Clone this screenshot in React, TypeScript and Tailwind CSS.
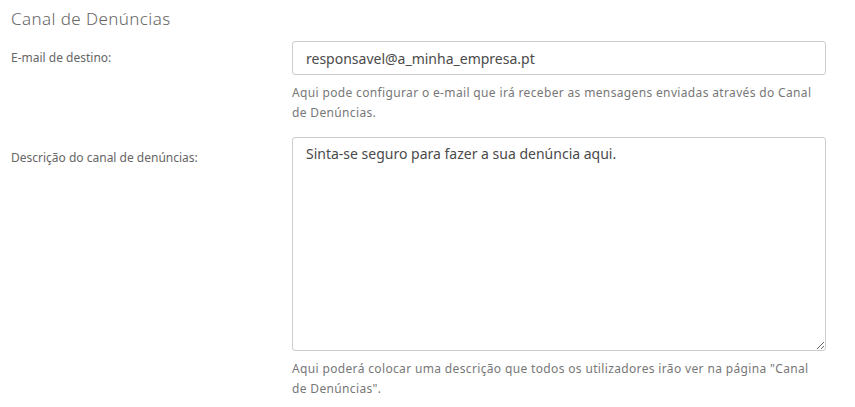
export default function App() {
  return (
    <div className="w-[855px] h-[407px] bg-white font-['Noto_Sans',sans-serif] text-[#555]">
      <h1 className="pl-[11px] pt-[8px] text-[17px] leading-[21px] font-light tracking-[0.4px] text-[#666]">
        Canal de Denúncias
      </h1>
      <div className="mt-[12px] flex">
        <label className="w-[292px] shrink-0 pl-[11px] pt-[9px] text-[12px] leading-[15px] text-[#666]">
          E-mail de destino:
        </label>
        <div className="w-[534px]">
          <input
            className="block w-full h-[34px] rounded-[3px] border border-[#ccc] px-[13px] text-[14px] text-[#4a4a4a] outline-none"
            defaultValue="responsavel@a_minha_empresa.pt"
          />
          <p className="mt-[8px] text-[12px] leading-[20px] text-[#777] tracking-[0.35px]">
            Aqui pode configurar o e-mail que irá receber as mensagens enviadas através do Canal de Denúncias.
          </p>
        </div>
      </div>
      <div className="mt-[14px] flex">
        <label className="w-[292px] shrink-0 pl-[11px] pt-[13px] text-[12px] leading-[15px] text-[#666]">
          Descrição do canal de denúncias:
        </label>
        <div className="w-[534px]">
          <textarea
            className="block w-full h-[214px] rounded-[3px] border border-[#ccc] px-[13px] py-[6px] text-[14px] leading-[20px] text-[#4a4a4a] outline-none resize-y"
            defaultValue="Sinta-se seguro para fazer a sua denúncia aqui."
          />
          <p className="mt-[8px] text-[12px] leading-[20px] text-[#777] tracking-[0.35px]">
            Aqui poderá colocar uma descrição que todos os utilizadores irão ver na página "Canal de Denúncias".
          </p>
        </div>
      </div>
    </div>
  );
}
